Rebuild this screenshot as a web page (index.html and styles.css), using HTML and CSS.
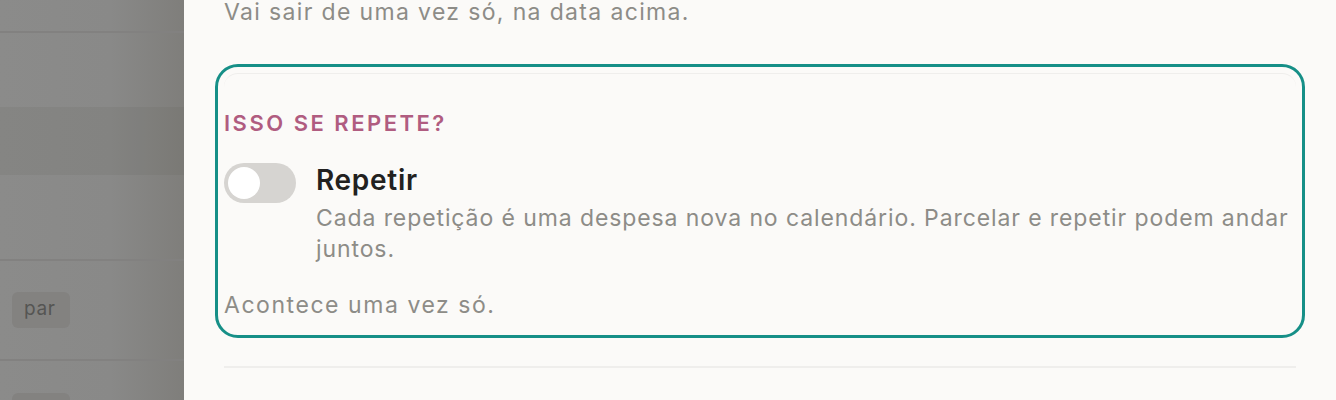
FILE: index.html
```html
<!DOCTYPE html>
<html lang="pt-BR">
<head>
<meta charset="utf-8">
<link rel="stylesheet" href="styles.css">
</head>
<body>
<div class="screen">
  <div class="backdrop">
    <div class="bg-row bg-row-top"></div>
    <div class="bg-row bg-row-a"></div>
    <div class="bg-row bg-row-band"></div>
    <div class="bg-row bg-row-b"></div>
    <div class="bg-row bg-row-c"><span class="bg-pill">par</span></div>
    <div class="bg-row bg-row-d"><span class="bg-pill"></span></div>
  </div>
  <aside class="drawer">
    <p class="hint">Vai sair de uma vez só, na data acima.</p>
    <section class="repeat-box">
      <h3 class="section-title">ISSO SE REPETE?</h3>
      <div class="toggle-row">
        <span class="switch"><span class="knob"></span></span>
        <div class="toggle-text">
          <div class="toggle-label">Repetir</div>
          <div class="toggle-desc">Cada repetição é uma despesa nova no calendário. Parcelar e repetir podem andar juntos.</div>
        </div>
      </div>
      <p class="status">Acontece uma vez só.</p>
    </section>
    <hr class="divider">
  </aside>
</div>
</body>
</html>
```
FILE: styles.css
```css
html, body {
  margin: 0;
  padding: 0;
  height: 400px;
  overflow: hidden;
  font-family: Inter, "Noto Sans", sans-serif;
}
.screen {
  display: flex;
  height: 400px;
  overflow: hidden;
}
.backdrop {
  width: 184px;
  flex: none;
  background: linear-gradient(to right, #8b8b8a 0%, #898988 60%, #7f7e7b 100%);
  display: flex;
  flex-direction: column;
}
.bg-row {
  border-bottom: 2px solid #828180;
  flex: none;
}
.bg-row-top { height: 31px; }
.bg-row-a { height: 74px; border-bottom: none; }
.bg-row-band { height: 68px; background: rgba(90, 88, 82, 0.12); border-bottom: none; }
.bg-row-b { height: 84px; }
.bg-row-c { height: 98px; display: flex; align-items: center; padding-left: 12px; }
.bg-row-d { height: 40px; border-bottom: none; padding-left: 12px; padding-top: 32px; }
.bg-pill {
  display: inline-block;
  background: #838280;
  color: #555553;
  font-size: 19px;
  letter-spacing: 0.03em;
  border-radius: 6px;
  padding: 5px 12px 7px;
  min-width: 34px;
  height: 24px;
}
.drawer {
  flex: 1;
  background: #fbfaf8;
  padding: 0 40px;
}
.hint {
  margin: -2px 0 0;
  font-size: 23px;
  line-height: 28px;
  color: #8d8c87;
  letter-spacing: 1.35px;
}
.repeat-box {
  margin-top: 47px;
  border-top: 1px solid #efeeec;
  border-radius: 14px;
  outline: 3px solid #168f87;
  outline-offset: 6px;
  padding: 36px 0 10px;
}
.section-title {
  margin: 0;
  font-size: 22px;
  font-weight: 600;
  letter-spacing: 2.5px;
  color: #b05c80;
  line-height: 26px;
}
.toggle-row {
  display: flex;
  gap: 20px;
  margin-top: 26px;
}
.switch {
  flex: none;
  width: 72px;
  height: 40px;
  margin-top: 1px;
  border-radius: 20px;
  background: #d6d4d1;
  display: flex;
  align-items: center;
  padding-left: 4px;
  box-sizing: border-box;
}
.knob {
  width: 32px;
  height: 32px;
  border-radius: 50%;
  background: #fff;
}
.toggle-text {
  flex: 1;
  min-width: 0;
}
.toggle-label {
  font-size: 28px;
  font-weight: 600;
  color: #222120;
  line-height: 36px;
  letter-spacing: 0.7px;
}
.toggle-desc {
  margin-top: 5px;
  font-size: 23px;
  line-height: 31px;
  color: #8d8c87;
  letter-spacing: 0.9px;
}
.status {
  margin: 26px 0 0;
  font-size: 23px;
  line-height: 28px;
  color: #8d8c87;
  letter-spacing: 1.55px;
}
.divider {
  border: none;
  border-top: 2px solid #efeeec;
  margin: 37px 0 0;
}
```
